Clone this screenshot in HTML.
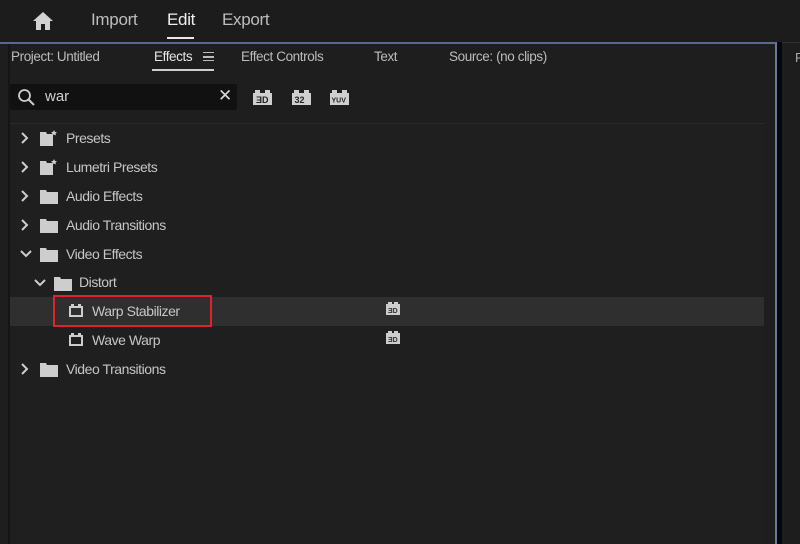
<!DOCTYPE html>
<html><head><meta charset="utf-8"><style>
*{margin:0;padding:0;box-sizing:border-box}
body{width:800px;height:544px;background:#1d1d1d;font-family:"Liberation Sans",sans-serif;color:#c4c4c4;position:relative;overflow:hidden}
.a{position:absolute;white-space:nowrap}
.nav{font-size:17px;top:10px;color:#bdbdbd;letter-spacing:-0.3px}
.tab{font-size:13.5px;top:49px;color:#bcbcbc;letter-spacing:-0.4px}
.row{position:absolute;left:0;height:29px;width:100%;font-size:14px;line-height:29px;color:#c6c6c6;letter-spacing:-0.45px}
.row span{position:absolute}
</style></head><body>
<div class="a" style="left:0;top:0;width:800px;height:42px;background:#1c1c1c"></div>
<svg class="a" style="left:32px;top:11px" width="22" height="20" viewBox="0 0 22 20"><path d="M11 1 L1 10 L4 10 L4 19 L9 19 L9 13 L13 13 L13 19 L18 19 L18 10 L21 10 Z" fill="#d2d2d2"/></svg>
<div class="a nav" style="left:91px">Import</div>
<div class="a nav" style="left:167px;color:#efefef">Edit</div>
<div class="a" style="left:167px;top:37px;width:27px;height:2px;background:#e8e8e8"></div>
<div class="a nav" style="left:222px">Export</div>
<div class="a" style="left:0;top:42px;width:777px;height:502px;border-top:2px solid #5a6a8a;border-right:2px solid #6a7a98;background:#1e1e1e"></div>
<div class="a" style="left:777px;top:42px;width:5px;height:502px;background:#05070c"></div>
<div class="a" style="left:782px;top:42px;width:18px;height:502px;background:#1d1d1d;border-top:1px solid #333"></div>
<div class="a" style="left:795px;top:50px;font-size:13px;color:#aaa">F</div>
<div class="a" style="left:8px;top:44px;width:2px;height:500px;background:#151515"></div>
<div class="a tab" style="left:11px">Project: Untitled</div>
<div class="a tab" style="left:154px;color:#e6e6e6">Effects</div>
<div class="a" style="left:203px;top:52px;width:11px;height:9px;border-top:1.5px solid #bbb;border-bottom:1.5px solid #bbb"></div>
<div class="a" style="left:203px;top:56px;width:11px;height:1.5px;background:#bbb"></div>
<div class="a" style="left:152px;top:69px;width:62px;height:2px;background:#cfcfcf"></div>
<div class="a tab" style="left:241px">Effect Controls</div>
<div class="a tab" style="left:374px">Text</div>
<div class="a tab" style="left:449px">Source: (no clips)</div>
<div class="a" style="left:10px;top:84px;width:227px;height:26px;background:#111112;border-radius:2px"></div>
<svg class="a" style="left:17px;top:88px" width="20" height="20" viewBox="0 0 20 20"><circle cx="7.5" cy="7.5" r="5.5" fill="none" stroke="#ccc" stroke-width="1.8"/><path d="M11.5 11.5 L17 17" stroke="#ccc" stroke-width="2"/></svg>
<div class="a" style="left:45px;top:88px;font-size:15px;color:#d0d0d0">war</div>
<div class="a" style="left:218px;top:86px;font-size:17px;color:#d8d8d8">✕</div>
<svg class="a" style="left:252px;top:89px" width="21" height="17" viewBox="0 0 21 17"><path d="M1 4h2V1h5v3h5V1h5v3h2v12H1z" fill="#cfcfcf"/><text x="4" y="14" font-size="9" font-family="Liberation Sans" font-weight="bold" fill="#222">ƎD</text></svg>
<svg class="a" style="left:291px;top:89px" width="21" height="17" viewBox="0 0 21 17"><path d="M1 4h2V1h5v3h5V1h5v3h2v12H1z" fill="#cfcfcf"/><text x="3.5" y="14" font-size="9" font-family="Liberation Sans" font-weight="bold" fill="#222">32</text></svg>
<svg class="a" style="left:329px;top:89px" width="21" height="17" viewBox="0 0 21 17"><path d="M1 4h2V1h5v3h5V1h5v3h2v12H1z" fill="#cfcfcf"/><text x="2.5" y="13.5" font-size="7" font-family="Liberation Sans" font-weight="bold" fill="#222">YUV</text></svg>
<div class="a" style="left:10px;top:123px;width:754px;height:421px;background:#1f1f1f;border-top:1px solid #2a2a2a"></div>
<div class="a" style="left:10px;top:297px;width:754px;height:29px;background:#2f2f2f"></div>
<div class="a" style="left:53px;top:295px;width:159px;height:32px;border:2px solid #e0222a"></div>
<svg class="a" style="left:0;top:123px" width="420" height="260" viewBox="0 123 420 260" fill="#cdcdcd" stroke="#cdcdcd">
<g fill="none" stroke-width="2">
<path d="M22 133l5 5-5 5M22 162l5 5-5 5M22 191l5 5-5 5M22 220l5 5-5 5M22 364l5 5-5 5"/>
<path d="M21 251l5 5 5-5M35 280l5 5 5-5"/>
</g>
<g stroke="none">
<path d="M40 132h6l1 2h6v12H40zM40 161h6l1 2h6v12H40z"/>
<path d="M54 130l1 2h2l-1.5 1.5 .5 2-2-1-2 1 .5-2L51 132h2zM54 159l1 2h2l-1.5 1.5 .5 2-2-1-2 1 .5-2L51 161h2z"/>
<path d="M40 190h6l1 2h11v12H40zM40 219h6l1 2h11v12H40zM40 248h6l1 2h11v12H40zM40 363h6l1 2h11v12H40zM54 277h6l1 2h11v12H54z"/>
<path d="M69 306h2v-2h3v2h4v-2h3v2h2v11H69zM69 335h2v-2h3v2h4v-2h3v2h2v11H69z"/>
<path d="M386 304h2v-2h4v2h2v-2h4v2h2v11h-14zM386 333h2v-2h4v2h2v-2h4v2h2v11h-14z"/>
</g>
<g fill="#2f2f2f" stroke="none"><rect x="71" y="308" width="10" height="7"/><rect x="71" y="337" width="10" height="7" fill="#1f1f1f"/></g>
<g fill="#333" stroke="none" font-size="7" font-family="Liberation Sans" font-weight="bold"><text x="388" y="313">ƎD</text><text x="388" y="342">ƎD</text></g>
</svg>
<div class="row" style="top:124px"><span style="left:66px">Presets</span></div>
<div class="row" style="top:153px"><span style="left:66px">Lumetri Presets</span></div>
<div class="row" style="top:182px"><span style="left:66px">Audio Effects</span></div>
<div class="row" style="top:211px"><span style="left:66px">Audio Transitions</span></div>
<div class="row" style="top:240px"><span style="left:66px">Video Effects</span></div>
<div class="row" style="top:268px"><span style="left:79px">Distort</span></div>
<div class="row" style="top:297px"><span style="left:92px">Warp Stabilizer</span></div>
<div class="row" style="top:326px"><span style="left:92px">Wave Warp</span></div>
<div class="row" style="top:355px"><span style="left:66px">Video Transitions</span></div>
</body></html>
